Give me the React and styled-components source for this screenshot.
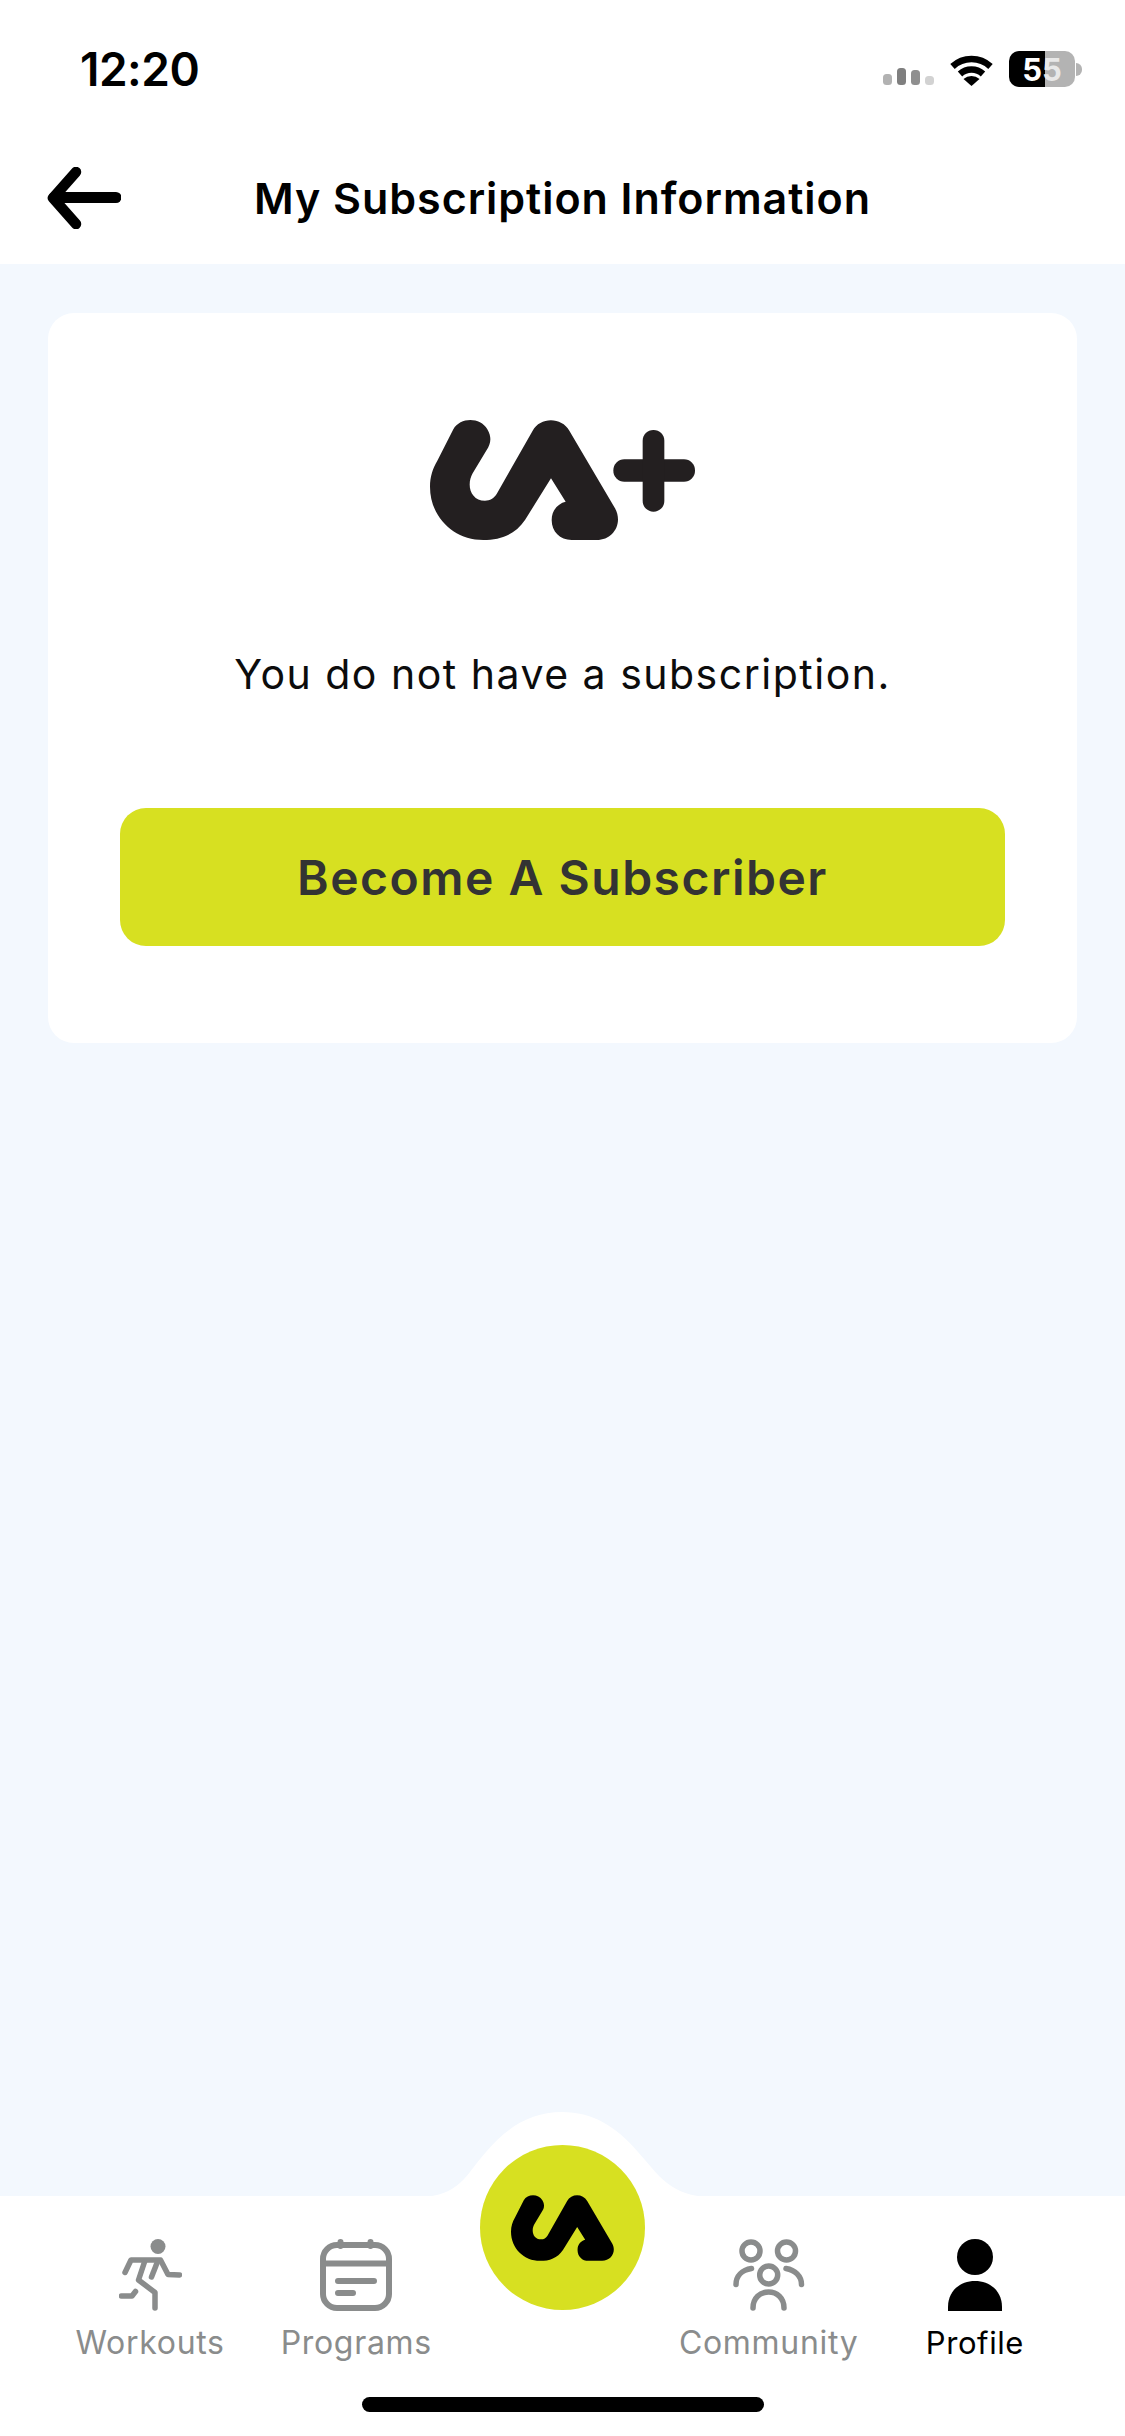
import React from 'react';
import styled, { createGlobalStyle } from 'styled-components';

const GlobalStyle = createGlobalStyle`
  html, body {
    margin: 0;
    padding: 0;
    background: #f3f8fe;
  }
  * {
    box-sizing: border-box;
  }
`;

const Screen = styled.div`
  position: relative;
  display: flex;
  flex-direction: column;
  width: 1125px;
  height: 2436px;
  overflow: hidden;
  background: #f3f8fe;
  font-family: 'Inter', 'Liberation Sans', sans-serif;
`;

const TopBar = styled.header`
  height: 264px;
  background: #ffffff;
  display: flex;
  flex-direction: column;
`;

const StatusBar = styled.div`
  display: flex;
  align-items: center;
  justify-content: space-between;
  height: 88px;
  margin-top: 25px;
  padding: 0 50px 0 80px;
`;

const Time = styled.span`
  font-size: 46px;
  font-weight: 600;
  letter-spacing: -0.5px;
  color: #000;
`;

const StatusIcons = styled.div`
  display: flex;
  align-items: center;
  gap: 15px;
`;

const Signal = styled.svg`
  margin-top: 15px;
`;

const Battery = styled.div`
  position: relative;
  display: flex;
  align-items: center;
  justify-content: center;
  width: 66px;
  height: 36px;
  border-radius: 10px;
  background: linear-gradient(90deg, #000 0 36px, #b3b3b3 36px);
  font-size: 31px;
  font-weight: 700;
  color: #fff;
  &::after {
    content: '';
    position: absolute;
    right: -7px;
    top: 12px;
    width: 6px;
    height: 13px;
    border-radius: 0 6px 6px 0;
    background: #b3b3b3;
  }
`;

const FadedDigit = styled.span`
  color: #e8e8e8;
`;

const NavRow = styled.div`
  display: grid;
  grid-template-columns: 1fr auto 1fr;
  align-items: center;
  height: 80px;
  margin-top: 45px;
  padding: 0 47px;
`;

const BackButton = styled.button`
  display: flex;
  width: 74px;
  padding: 0;
  border: none;
  background: none;
`;

const Title = styled.h1`
  margin: 0;
  font-size: 43px;
  font-weight: 600;
  letter-spacing: 0.95px;
  color: #000;
`;

const Content = styled.main`
  flex: 1;
  padding: 49px 48px 0;
`;

const Card = styled.section`
  display: flex;
  flex-direction: column;
  align-items: center;
  height: 730px;
  padding: 107px 72px 0;
  border-radius: 26px;
  background: #ffffff;
`;

const Message = styled.p`
  margin: 106px 0 0;
  font-size: 41px;
  font-weight: 400;
  letter-spacing: 1.5px;
  line-height: 56px;
  color: #0c0c0c;
`;

const CtaButton = styled.button`
  width: 100%;
  height: 138px;
  margin-top: 106px;
  border: none;
  border-radius: 26px;
  background: #d7e021;
  font-family: inherit;
  font-size: 48px;
  font-weight: 600;
  letter-spacing: 1.5px;
  color: #333333;
`;

const TabBar = styled.nav`
  position: relative;
  height: 240px;
  padding: 43px 47px 0;
  background: #ffffff;
  display: grid;
  grid-template-columns: repeat(5, 1fr);
`;

const Hump = styled.svg`
  position: absolute;
  left: 400px;
  top: -84px;
`;

const HomeButton = styled.button`
  position: absolute;
  left: 480px;
  top: -51px;
  display: flex;
  align-items: center;
  justify-content: center;
  width: 165px;
  height: 165px;
  padding: 0;
  border: none;
  border-radius: 50%;
  background: #d7e021;
`;

const Tab = styled.div`
  display: flex;
  flex-direction: column;
  align-items: center;
  grid-column: ${(p) => p.$col};
  color: ${(p) => (p.$active ? '#000000' : '#8a8c8c')};
`;

const TabIcon = styled.svg`
  display: block;
  height: 72px;
`;

const TabLabel = styled.span`
  margin-top: 13px;
  font-size: ${(p) => (p.$active ? 31 : 32)}px;
  font-weight: 400;
  line-height: 38px;
  letter-spacing: ${(p) => (p.$active ? 0.6 : 0.7)}px;
  white-space: nowrap;
`;

const HomeIndicator = styled.div`
  position: absolute;
  left: 362px;
  bottom: 24px;
  width: 402px;
  height: 15px;
  border-radius: 8px;
  background: #000000;
`;

const UA_PATH =
  'M160 118C180 82 240 80 262 118C278 145 270 165 260 180L218 250C198 285 212 332 255 332C270 332 282 325 290 312L398 122C420 80 485 80 508 122L645 355C670 400 640 450 590 450L515 450C480 450 455 425 455 390C455 360 475 340 497 335L453 265L375 390C345 435 300 450 250 450C160 450 90 380 90 290C90 260 98 235 112 212Z';

const Logo = () => (
  <svg width="265" height="120" viewBox="90 90 795 360" style={{ flexShrink: 0 }}>
    <path d={UA_PATH} fill="#231f20" />
    <rect x="640" y="208" width="245" height="67" rx="33" fill="#231f20" />
    <rect x="728" y="120" width="65" height="245" rx="32" fill="#231f20" />
  </svg>
);

const SmallLogo = () => (
  <svg width="103" height="66" viewBox="90 90 565 360">
    <path d={UA_PATH} fill="#000" />
  </svg>
);

const BackArrow = () => (
  <svg width="74" height="62" viewBox="0 0 74 62" fill="none" stroke="#000" strokeLinecap="round" strokeLinejoin="round">
    <path d="M29 5L6 31L29 57" strokeWidth="10.5" />
    <path d="M7 30.5H69" strokeWidth="11" />
  </svg>
);

const WifiIcon = () => (
  <svg width="45" height="33" viewBox="0 0 45 33">
    <path d="M3.5 13.5A28 28 0 0 1 41.5 13.5" fill="none" stroke="#000" strokeWidth="6.5" />
    <path d="M11 21A17 17 0 0 1 34 21" fill="none" stroke="#000" strokeWidth="6.5" />
    <path d="M22.5 33L14.5 26A12 12 0 0 1 30.5 26Z" fill="#000" />
  </svg>
);

const SignalIcon = () => (
  <Signal width="51" height="17" viewBox="0 0 51 17">
    <rect x="0" y="6" width="9" height="11" rx="3.5" fill="#b2b2b2" />
    <rect x="14" y="0" width="9" height="17" rx="3.5" fill="#7f7f7f" />
    <rect x="28" y="2" width="9" height="15" rx="3.5" fill="#8f8f8f" />
    <rect x="42" y="8" width="9" height="9" rx="3.5" fill="#d2d2d2" />
  </Signal>
);

const RunnerIcon = () => (
  <TabIcon width="63" viewBox="0 0 63 72" fill="none" stroke="currentColor" strokeWidth="5.5" strokeLinecap="round" strokeLinejoin="round">
    <circle cx="39" cy="7.5" r="7.5" fill="currentColor" stroke="none" />
    <path d="M6 33.5L12 21H41.5L49 35.5L60.5 36" />
    <path d="M25.5 23L19.5 41L36 53.5V69" />
    <path d="M2.5 57H13L16.5 52.5" />
    <path d="M38 24L32.5 38" />
  </TabIcon>
);

const CalendarIcon = () => (
  <TabIcon width="72" viewBox="0 0 72 72" fill="none" stroke="currentColor" strokeWidth="6" strokeLinecap="round">
    <rect x="3" y="6" width="66" height="63" rx="14" />
    <path d="M3 24.5H69" />
    <path d="M20.5 3V7M50.5 3V7" />
    <path d="M18 42H54M18 54H33" />
  </TabIcon>
);

const CommunityIcon = () => (
  <TabIcon width="72" viewBox="0 0 72 72" fill="none" stroke="currentColor" strokeWidth="5.5" strokeLinecap="round">
    <circle cx="18" cy="12" r="9" />
    <circle cx="53.5" cy="12" r="9" />
    <circle cx="35.7" cy="36" r="9" />
    <path d="M20 69C20 59 27 53 35.5 53S51 59 51 69" />
    <path d="M3 45.5C3 37 9 31 18.5 29.5" />
    <path d="M53 29.5C62 31 68.5 37 68.5 45.5" />
  </TabIcon>
);

const ProfileIcon = () => (
  <TabIcon width="54" viewBox="0 0 54 72" fill="currentColor">
    <ellipse cx="27" cy="18" rx="18" ry="18" />
    <path d="M0 72V68C0 52 12 42 27 42S54 52 54 68V72Z" />
  </TabIcon>
);

const App = () => {
  return (
    <Screen>
      <GlobalStyle />
      <TopBar>
        <StatusBar>
          <Time>12:20</Time>
          <StatusIcons>
            <SignalIcon />
            <WifiIcon />
            <Battery>
              5<FadedDigit>5</FadedDigit>
            </Battery>
          </StatusIcons>
        </StatusBar>
        <NavRow>
          <BackButton>
            <BackArrow />
          </BackButton>
          <Title>My Subscription Information</Title>
        </NavRow>
      </TopBar>

      <Content>
        <Card>
          <Logo />
          <Message>You do not have a subscription.</Message>
          <CtaButton>Become A Subscriber</CtaButton>
        </Card>
      </Content>

      <TabBar>
        <Hump width="325" height="85" viewBox="0 0 325 85">
          <path d="M0 85H18C60 85 66 62 86 40C108 14 132 0 162 0C192 0 216 14 238 40C258 62 270 85 312 85H325V85Z" fill="#ffffff" />
        </Hump>
        <HomeButton>
          <SmallLogo />
        </HomeButton>
        <Tab $col={1}>
          <RunnerIcon />
          <TabLabel>Workouts</TabLabel>
        </Tab>
        <Tab $col={2}>
          <CalendarIcon />
          <TabLabel>Programs</TabLabel>
        </Tab>
        <Tab $col={4}>
          <CommunityIcon />
          <TabLabel>Community</TabLabel>
        </Tab>
        <Tab $col={5} $active>
          <ProfileIcon />
          <TabLabel $active>Profile</TabLabel>
        </Tab>
        <HomeIndicator />
      </TabBar>
    </Screen>
  );
};

export default App;
